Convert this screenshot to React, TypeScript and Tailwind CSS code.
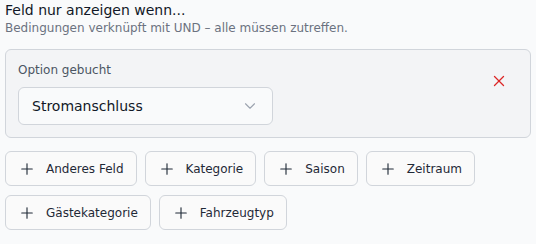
import { Plus, X, ChevronDown } from "lucide-react";

const addButtons = ["Anderes Feld", "Kategorie", "Saison", "Zeitraum", "Gästekategorie", "Fahrzeugtyp"];

export default function App() {
  return (
    <div className="min-h-screen bg-[#f9fafb] px-[5px] font-['DejaVu_Sans',sans-serif] text-[#111827]">
      <div className="text-sm leading-5">Feld nur anzeigen wenn...</div>
      <div className="text-xs leading-4 text-[#6b7280]">Bedingungen verknüpft mit UND – alle müssen zutreffen.</div>

      {/* condition card */}
      <div className="mt-[13px] flex h-[89px] items-start rounded-md border border-[#d1d5db] bg-[#f3f4f6] px-3 pt-3">
        <div className="flex-1">
          <div className="mb-[9px] text-xs leading-4 text-[#4b5563]">Option gebucht</div>
          <button className="flex h-[38px] w-[255px] items-center justify-between rounded-md border border-[#d1d5db] bg-[#f9fafb] pl-[13px] pr-[13px] text-sm text-[#111827]">
            <span>Stromanschluss</span>
            <ChevronDown className="h-[18px] w-[18px] text-[#9ca3af]" strokeWidth={1.5} />
          </button>
        </div>
        <button className="flex h-[38px] w-[38px] items-center justify-center text-[#dc2626]">
          <X className="h-[18px] w-[18px]" strokeWidth={1.75} />
        </button>
      </div>

      <div className="mt-[13px] flex flex-wrap gap-x-2 gap-y-[9px]">
        {addButtons.map((label) => (
          <button
            key={label}
            className="flex h-[35px] items-center gap-2.5 rounded-md border border-[#d1d5db] bg-[#fafafa] px-3 text-xs text-[#1f2937]"
          >
            <Plus className="h-[18px] w-[18px]" strokeWidth={1.5} />
            <span>{label}</span>
          </button>
        ))}
      </div>
    </div>
  );
}
